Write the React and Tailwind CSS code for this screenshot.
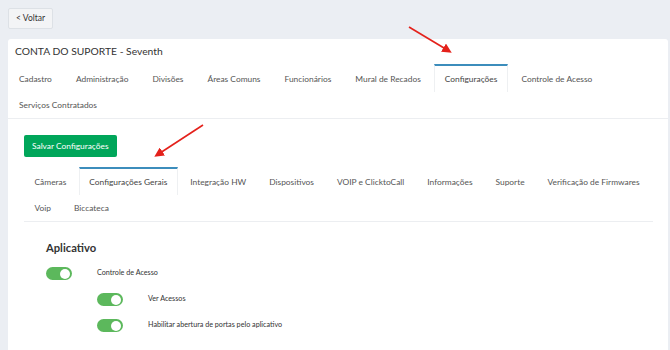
import React from "react";

const outerTabs = [
  "Cadastro",
  "Administração",
  "Divisões",
  "Áreas Comuns",
  "Funcionários",
  "Mural de Recados",
  "Configurações",
  "Controle de Acesso",
  "Serviços Contratados",
];
const innerTabs = [
  "Câmeras",
  "Configurações Gerais",
  "Integração HW",
  "Dispositivos",
  "VOIP e ClicktoCall",
  "Informações",
  "Suporte",
  "Verificação de Firmwares",
  "Voip",
  "Biccateca",
];

function Tab({ label, active, outer }) {
  const pad = outer
    ? active
      ? "px-[10px]"
      : "px-[11px]"
    : active
    ? "px-[9.5px]"
    : "px-[10.5px]";
  return (
    <div
      className={
        active
          ? `-mt-[2px] mr-[2px] border-t-2 border-x border-t-[#3c8dbc] border-x-[#eef0f2] bg-white py-[6px] text-[8.4px] leading-[14px] text-[#444] ${pad}`
          : `mr-[2px] py-[6px] text-[8.4px] leading-[14px] text-[#555] ${pad}`
      }
    >
      {label}
    </div>
  );
}

function Toggle() {
  return (
    <div className="flex h-[13px] w-[26px] items-center justify-end rounded-full bg-[#5cb85c] pr-[2px]">
      <div className="h-[10px] w-[10px] rounded-full bg-white" />
    </div>
  );
}

export default function App() {
  return (
    <div
      className="relative h-[350px] w-[670px] overflow-hidden bg-[#ebeef3]"
      style={{ fontFamily: "Lato, 'Open Sans', sans-serif" }}
    >
      <div className="flex pl-[8px] pt-[8px]">
        <button className="h-[21px] rounded-[2px] border border-[#dde1e6] bg-[#f3f4f6] px-[7px] text-[8.5px] leading-[19px] text-[#333]">
          &lt; Voltar
        </button>
      </div>
      <div className="ml-[8px] mr-[2px] mt-[10px] h-[400px] rounded-t-[3px] bg-white">
        <div className="border-b border-[#eceef1]">
          <div className="px-[7px] pt-[4px] text-[10.3px] leading-[16px] text-[#333]">
            CONTA DO SUPORTE - Seventh
          </div>
          <div className="mt-[7px] flex flex-wrap">
            {outerTabs.map((t) => (
              <Tab key={t} label={t} outer active={t === "Configurações"} />
            ))}
          </div>
        </div>
        <div className="pl-[16px] pr-[15px] pt-[16px]">
          <div className="flex">
            <button className="h-[22px] rounded-[2px] bg-[#00a65a] px-[8px] text-[8.4px] leading-[22px] text-white">
              Salvar Configurações
            </button>
          </div>
          <div className="mt-[12px] flex flex-wrap border-b border-[#eceef1]">
            {innerTabs.map((t) => (
              <Tab key={t} label={t} active={t === "Configurações Gerais"} />
            ))}
          </div>
          <div className="pl-[22px] pt-[19px]">
            <div className="text-[11.2px] font-bold leading-[14px] text-[#333]">
              Aplicativo
            </div>
            <div className="mt-[12px] flex items-center">
              <Toggle />
              <span className="ml-[25px] text-[7.2px] text-[#333]">
                Controle de Acesso
              </span>
            </div>
            <div className="ml-[51px] mt-[13px] flex items-center">
              <Toggle />
              <span className="ml-[25px] text-[7.2px] text-[#333]">
                Ver Acessos
              </span>
            </div>
            <div className="ml-[51px] mt-[13px] flex items-center">
              <Toggle />
              <span className="ml-[25px] text-[7.2px] text-[#333]">
                Habilitar abertura de portas pelo aplicativo
              </span>
            </div>
          </div>
        </div>
      </div>
      <svg
        className="pointer-events-none absolute left-0 top-0"
        width="670"
        height="350"
      >
        <defs>
          <marker
            id="ah"
            markerWidth="6"
            markerHeight="6"
            refX="4"
            refY="3"
            orient="auto"
            markerUnits="strokeWidth"
          >
            <path d="M0,0 L6,3 L0,6 z" fill="#e4211b" />
          </marker>
        </defs>
        <line x1="409" y1="27" x2="449" y2="51" stroke="#e4211b" strokeWidth="1.6" markerEnd="url(#ah)" />
        <line x1="203" y1="125" x2="157" y2="155" stroke="#e4211b" strokeWidth="1.6" markerEnd="url(#ah)" />
      </svg>
    </div>
  );
}
